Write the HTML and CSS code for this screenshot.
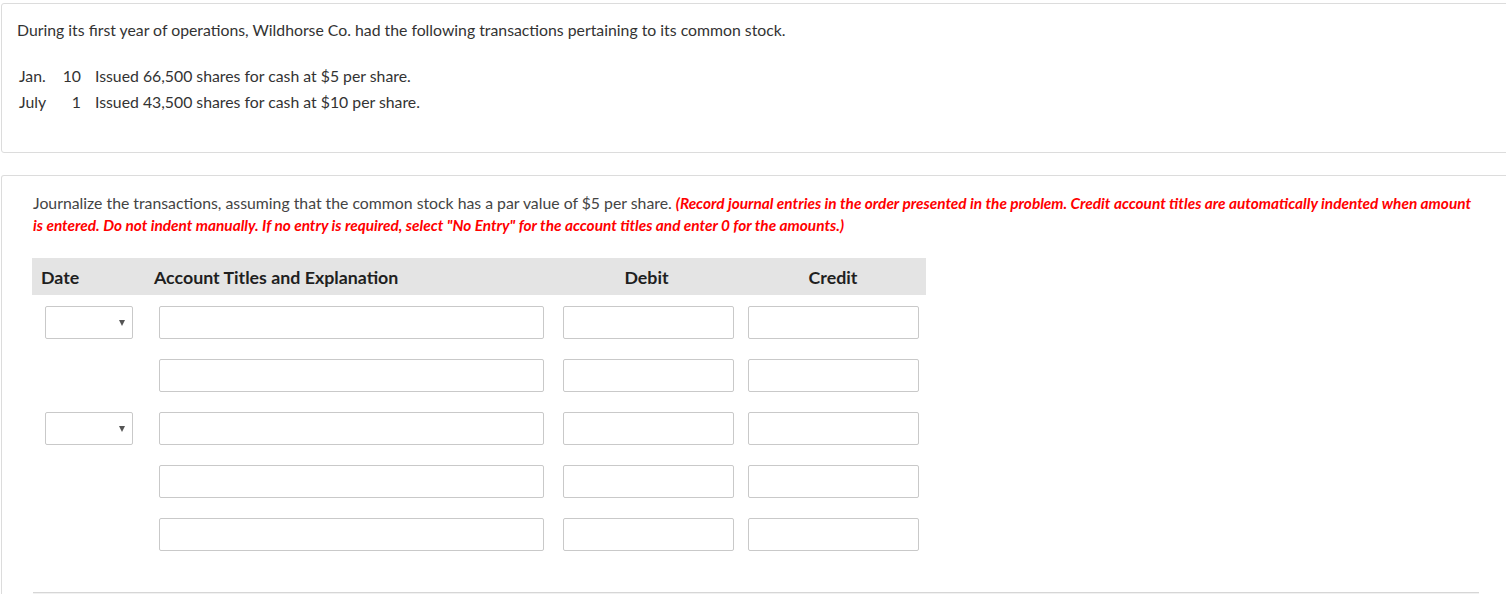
FILE: index.html
```html
<!DOCTYPE html>
<html>
<head>
<meta charset="utf-8">
<link rel="stylesheet" href="styles.css">
</head>
<body>
<div class="page">
  <section class="panel intro">
    <p class="lead">During its first year of operations, Wildhorse Co. had the following transactions pertaining to its common stock.</p>
    <table class="tx">
      <tr><td class="mon">Jan.</td><td class="day">10</td><td class="desc">Issued 66,500 shares for cash at $5 per share.</td></tr>
      <tr><td class="mon">July</td><td class="day">1</td><td class="desc">Issued 43,500 shares for cash at $10 per share.</td></tr>
    </table>
  </section>

  <section class="panel work">
    <div class="inner">
      <p class="instr">Journalize the transactions, assuming that the common stock has a par value of $5 per share. <em class="warn">(Record journal entries in the order presented in the problem. Credit account titles are automatically indented when amount is entered. Do not indent manually. If no entry is required, select "No Entry" for the account titles and enter 0 for the amounts.)</em></p>

      <div class="journal">
        <div class="jhead">
          <div class="h-date">Date</div>
          <div class="h-acct">Account Titles and Explanation</div>
          <div class="h-num">Debit</div>
          <div class="h-num">Credit</div>
        </div>

        <div class="jrow">
          <div class="c-date"><div class="sel"><span class="caret"></span></div></div>
          <div class="c-acct"><div class="box acct"></div></div>
          <div class="c-deb"><div class="box num"></div></div>
          <div class="c-cred"><div class="box num"></div></div>
        </div>
        <div class="jrow">
          <div class="c-date"></div>
          <div class="c-acct"><div class="box acct"></div></div>
          <div class="c-deb"><div class="box num"></div></div>
          <div class="c-cred"><div class="box num"></div></div>
        </div>
        <div class="jrow">
          <div class="c-date"><div class="sel"><span class="caret"></span></div></div>
          <div class="c-acct"><div class="box acct"></div></div>
          <div class="c-deb"><div class="box num"></div></div>
          <div class="c-cred"><div class="box num"></div></div>
        </div>
        <div class="jrow">
          <div class="c-date"></div>
          <div class="c-acct"><div class="box acct"></div></div>
          <div class="c-deb"><div class="box num"></div></div>
          <div class="c-cred"><div class="box num"></div></div>
        </div>
        <div class="jrow">
          <div class="c-date"></div>
          <div class="c-acct"><div class="box acct"></div></div>
          <div class="c-deb"><div class="box num"></div></div>
          <div class="c-cred"><div class="box num"></div></div>
        </div>
      </div>
      <div class="rule"></div>
    </div>
  </section>
</div>
</body>
</html>
```

FILE: styles.css
```css
html, body {
  margin: 0;
  padding: 0;
  background: #fff;
  overflow: hidden;
}
body {
  font-family: Lato, "Open Sans", "Liberation Sans", sans-serif;
  font-size: 15.8px;
  color: #333;
}
.page {
  padding-top: 3px;
  padding-left: 1px;
  width: 1560px;
}
.panel {
  border: 1px solid #dcdcdc;
  border-radius: 3px;
  background: #fff;
}
.intro {
  height: 150px;
  box-sizing: border-box;
  padding: 15px 15px 0;
}
.lead {
  margin: 0;
  line-height: 22px;
  color: #333;
}
.tx {
  margin-top: 22px;
  border-collapse: collapse;
  color: #333;
}
.tx td {
  padding: 0;
  line-height: 26px;
  vertical-align: middle;
}
.tx .mon {
  padding-left: 2px;
  width: 37px;
}
.tx .day {
  width: 25px;
  text-align: right;
}
.tx .desc {
  padding-left: 14px;
}
.work {
  margin-top: 22px;
  height: 440px;
  border-bottom: none;
  border-radius: 3px 3px 0 0;
  padding: 16px 0 0 31px;
}
.inner {
  width: 1446px;
}
.instr {
  margin: 0;
  line-height: 22px;
  color: #444;
}
.warn {
  color: #ff0000;
  font-weight: 700;
  font-style: italic;
  font-size: 15.4px;
}
.journal {
  margin-top: 22px;
  margin-left: -1px;
  width: 894px;
}
.jhead {
  display: grid;
  grid-template-columns: 113px 408px 187px 186px;
  height: 37px;
  align-items: center;
  background: #e4e4e4;
  font-weight: 700;
  color: #1f1f1f;
  font-size: 17.8px;
}
.h-date { padding-left: 9px; }
.h-acct { padding-left: 9px; }
.h-num { text-align: center; }
.jrow {
  display: grid;
  grid-template-columns: 113px 408px 187px 186px;
  height: 33px;
  margin-top: 11px;
}
.jrow + .jrow {
  margin-top: 20px;
}
.c-date { padding-left: 13px; }
.c-acct { padding-left: 14px; }
.c-deb { padding-left: 10px; }
.c-cred { padding-left: 8px; }
.box, .sel {
  box-sizing: border-box;
  height: 33px;
  border: 1px solid #c9c9c9;
  border-radius: 2px;
  background: #fff;
}
.acct { width: 385px; }
.num { width: 171px; }
.sel {
  width: 88px;
  display: flex;
  align-items: center;
  justify-content: flex-end;
  padding-right: 7px;
}
.caret {
  width: 0;
  height: 0;
  border-left: 3px solid transparent;
  border-right: 3px solid transparent;
  border-top: 6px solid #555;
}
.rule {
  margin-top: 41px;
  height: 1px;
  background: #d6d6d6;
  box-shadow: 0 1px 1px #eee;
}
```
